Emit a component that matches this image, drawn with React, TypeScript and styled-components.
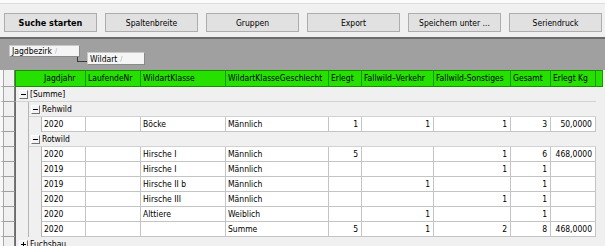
import React from 'react';
import styled, { createGlobalStyle, css } from 'styled-components';

const Global = createGlobalStyle`
  html, body { margin: 0; padding: 0; background: #f0f0f0; }
  * { box-sizing: border-box; }
`;

const FONT = `"DejaVu Sans Condensed", "Liberation Sans", Arial, sans-serif`;

const Root = styled.div`
  width: 605px;
  height: 246px;
  overflow: hidden;
  background: #f0f0f0;
  display: flex;
  flex-direction: column;
  font-family: ${FONT};
  font-size: 8px;
  color: #000;
`;

const TopStrip = styled.div`
  flex: none;
  height: 4px;
  background: #fbfbfb;
  border-bottom: 1px solid #dcdcdc;
`;

const Toolbar = styled.div`
  flex: none;
  display: flex;
  gap: 8px;
  height: 33px;
  padding: 9px 0 5px 4px;
`;

const Button = styled.button<{ $bold?: boolean }>`
  width: 93px;
  height: 19px;
  padding: 0;
  background: #e1e1e1;
  border: 1px solid #adadad;
  font-family: ${FONT};
  font-size: 8.5px;
  color: #000;
  font-weight: ${p => (p.$bold ? 700 : 400)};
  ${p => p.$bold && css`font-size: 9px;`}
`;

const GroupPanel = styled.div`
  flex: none;
  height: 33px;
  background: #a0a0a0;
  border-top: 2px solid #6b6b6b;
  display: flex;
  align-items: flex-start;
  padding-left: 9px;
`;

const Chip = styled.div<{ $w: number; $top: number; $h: number }>`
  width: ${p => p.$w}px;
  height: ${p => p.$h}px;
  margin-top: ${p => p.$top}px;
  background: #f5f5f5;
  border: 1px solid #c8c8c8;
  border-right-color: #8a8a8a;
  border-bottom-color: #8a8a8a;
  display: flex;
  align-items: center;
  padding-left: 2px;
  font-size: 8.5px;
  white-space: nowrap;
`;

const SortMark = styled.span`
  color: #a8a8a8;
  margin-left: 3px;
  font-size: 7px;
`;

const Connector = styled.div`
  width: 10px;
  height: 5px;
  margin-top: 18px;
  margin-left: -3px;
  border-left: 1px solid #3a3a3a;
  border-bottom: 1px solid #3a3a3a;
`;

const Grid = styled.div`
  flex: 1;
  display: flex;
  flex-direction: column;
  background: #f0f0f0;
`;

const COLS = '15px 14px 13px 44px 55px 85px 103px 33px 72px 77px 40px 45px 7px 2px';

const Row = styled.div<{ $h?: number }>`
  display: grid;
  grid-template-columns: ${COLS};
  height: ${p => p.$h ?? 15}px;
  flex: none;
`;

const Selector = styled.div`
  grid-column: 1;
  background: #f0f0f0;
  border-left: 3px solid #f8f8f8;
  border-right: 1px solid #7a7a7a;
  border-bottom: 1px solid #a0a0a0;
  box-shadow: inset 1px 0 #a8a8a8;
`;

const HeaderCell = styled.div<{ $span?: number; $pad?: number }>`
  grid-column: span ${p => p.$span ?? 1};
  background: #26e000;
  border-top: 1px solid #169000;
  border-bottom: 1px solid #169000;
  border-right: 1px solid #1a9a00;
  padding-left: ${p => p.$pad ?? 2}px;
  line-height: 15px;
  white-space: nowrap;
  overflow: hidden;
  font-size: 8.5px;
`;

const HeaderFirst = styled(HeaderCell)`
  border-left: 1px solid #169000;
`;

const Indent = styled.div<{ $first?: boolean }>`
  background: #f0f0f0;
  border-right: 1px solid #b4b4b4;
  ${p => p.$first && css`border-left: 1px solid #6a6a6a;`}
`;

const GroupBar = styled.div<{ $level: number }>`
  grid-column: ${p => (p.$level === 1 ? '2 / 13' : '3 / 13')};
  background: #f0f0f0;
  border-bottom: 1px solid #d2d2d2;
  ${p => p.$level === 1 && css`border-left: 1px solid #6a6a6a;`}
  display: flex;
  align-items: center;
  padding-left: ${p => (p.$level === 1 ? 3 : 2)}px;
  gap: 2px;
  font-size: 8.5px;
  white-space: nowrap;
`;

const Expander = styled.span<{ $open: boolean }>`
  position: relative;
  width: 9px;
  height: 9px;
  flex: none;
  background: #f4f4f4;
  border: 1px solid #fff;
  border-right-color: #707070;
  border-bottom-color: #707070;
  &::before {
    content: '';
    position: absolute;
    left: 1px;
    top: 3px;
    width: 5px;
    height: 1px;
    background: #000;
  }
  ${p => !p.$open && css`
    &::after {
      content: '';
      position: absolute;
      left: 3px;
      top: 1px;
      width: 1px;
      height: 5px;
      background: #000;
    }
  `}
`;

const Cell = styled.div<{ $num?: boolean }>`
  background: #fff;
  border-right: 1px solid #c4c4c4;
  border-bottom: 1px solid #c4c4c4;
  padding: 0 3px 0 2px;
  text-align: ${p => (p.$num ? 'right' : 'left')};
  line-height: 14px;
  white-space: nowrap;
  overflow: hidden;
  font-size: 8.5px;
`;

const Filler = styled.div`
  grid-column: span 2;
`;

type DataRow = [string, string, string, string, string, string, string, string, string];

const headers = [
  'LaufendeNr',
  'WildartKlasse',
  'WildartKlasseGeschlecht',
  'Erlegt',
  'Fallwild\u2013Verkehr',
  'Fallwild-Sonstiges',
  'Gesamt',
  'Erlegt Kg',
];

const rehwild: DataRow[] = [['2020', '', 'Böcke', 'Männlich', '1', '1', '1', '3', '50,0000']];
const rotwild: DataRow[] = [
  ['2020', '', 'Hirsche I', 'Männlich', '5', '', '1', '6', '468,0000'],
  ['2019', '', 'Hirsche I', 'Männlich', '', '', '1', '1', ''],
  ['2019', '', 'Hirsche II b', 'Männlich', '', '1', '', '1', ''],
  ['2020', '', 'Hirsche III', 'Männlich', '', '', '1', '1', ''],
  ['2020', '', 'Alttiere', 'Weiblich', '', '1', '', '1', ''],
  ['2020', '', '', 'Summe', '5', '1', '2', '8', '468,0000'],
];

const Data = ({ row }: { row: DataRow }) => (
  <Row>
    <Selector />
    <Indent $first />
    <Indent />
    {row.map((v, i) => (
      <Cell key={i} $num={i >= 4}>
        {v}
      </Cell>
    ))}
  </Row>
);

const Group = ({ level, label, open }: { level: number; label: string; open: boolean }) => (
  <Row>
    <Selector />
    {level === 2 && <Indent $first />}
    <GroupBar $level={level}>
      <Expander $open={open} />
      <span>{label}</span>
    </GroupBar>
  </Row>
);

export default function App() {
  return (
    <Root>
      <Global />
      <TopStrip />
      <Toolbar>
        <Button $bold>Suche starten</Button>
        <Button>Spaltenbreite</Button>
        <Button>Gruppen</Button>
        <Button>Export</Button>
        <Button>Speichern unter ...</Button>
        <Button>Seriendruck</Button>
      </Toolbar>
      <GroupPanel>
        <Chip $w={71} $h={12} $top={6}>
          Jagdbezirk<SortMark>/</SortMark>
        </Chip>
        <Connector />
        <Chip $w={58} $h={13} $top={13}>
          Wildart<SortMark>/</SortMark>
        </Chip>
      </GroupPanel>
      <Grid>
        <Row $h={17}>
          <Selector />
          <HeaderFirst $span={3} $pad={28}>
            Jagdjahr
          </HeaderFirst>
          {headers.map(h => (
            <HeaderCell key={h}>{h}</HeaderCell>
          ))}
          <HeaderCell />
        </Row>
        <Group level={1} label="[Summe]" open />
        <Group level={2} label="Rehwild" open />
        {rehwild.map((r, i) => (
          <Data key={'a' + i} row={r} />
        ))}
        <Group level={2} label="Rotwild" open />
        {rotwild.map((r, i) => (
          <Data key={'b' + i} row={r} />
        ))}
        <Group level={1} label="Fuchsbau" open={false} />
      </Grid>
    </Root>
  );
}
